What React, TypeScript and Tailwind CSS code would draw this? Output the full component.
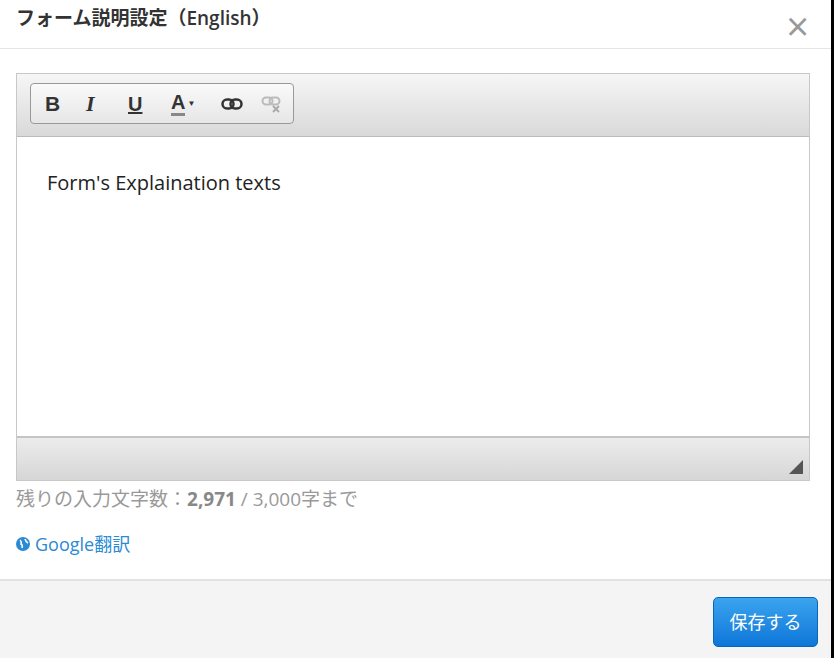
import React from "react";

export default function App() {
  const f = { fontFamily: '"Open Sans", "Noto Sans CJK JP", sans-serif' };
  return (
    <div className="w-[834px] h-[658px] flex bg-black" style={f}>
      <div className="w-[831px] h-[658px] flex flex-col bg-white">
        <div className="h-[49px] border-b border-[#e5e5e5] flex justify-between items-start px-4">
          <div className="text-[19px] text-[#333] mt-[4px] font-semibold">フォーム説明設定（English）</div>
          <div className="text-[40px] leading-none text-[#999] mt-[6px] mr-[6px]">×</div>
        </div>
        <div className="flex-1 px-4 pt-6">
          <div className="w-[794px] h-[408px] border border-[#c8c8c8] flex flex-col">
            <div className="h-[63px] bg-gradient-to-b from-[#f6f6f6] to-[#d9d9d9] border-b border-[#bbb] flex items-start pt-[9px] pl-[13px]">
              <div className="h-[41px] w-[264px] rounded-[4px] border border-[#999] bg-gradient-to-b from-[#fafafa] to-[#e6e6e6] flex items-center pl-[14px] text-[#333]" style={{ fontFamily: '"Liberation Sans", sans-serif' }}>
                <span className="font-bold text-[21px] w-[41px]">B</span>
                <span className="italic font-bold text-[22px] w-[42px]" style={{ fontFamily: '"Liberation Serif", serif' }}>I</span>
                <span className="underline font-bold text-[20px] w-[43px]">U</span>
                <span className="flex items-center w-[50px]">
                  <span className="font-bold text-[20px] border-b-[3px] border-[#888] leading-[21px]">A</span>
                  <span className="text-[8px] ml-[2px]">▼</span>
                </span>
                <svg width="22" height="14" viewBox="0 0 22 14" className="mr-[18px]">
                  <rect x="1.5" y="2.5" width="11" height="9" rx="4.5" fill="none" stroke="#333" strokeWidth="2.5" />
                  <rect x="9.5" y="2.5" width="11" height="9" rx="4.5" fill="none" stroke="#333" strokeWidth="2.5" />
                </svg>
                <svg width="22" height="18" viewBox="0 0 22 18">
                  <rect x="1.5" y="2.5" width="10" height="7" rx="3.5" fill="none" stroke="#bbb" strokeWidth="2" />
                  <rect x="8.5" y="2.5" width="10" height="7" rx="3.5" fill="none" stroke="#bbb" strokeWidth="2" />
                  <path d="M12 11 L18 17 M18 11 L12 17" stroke="#aaa" strokeWidth="2" />
                </svg>
              </div>
            </div>
            <div className="flex-1 bg-white px-[30px] pt-[31px] text-[20px] text-[#222]">Form's Explaination texts</div>
            <div className="h-[44px] border-t-2 border-[#c4c4c4] bg-gradient-to-b from-[#ececec] to-[#d6d6d6] flex items-end justify-end p-[6px]">
              <svg width="14" height="14" viewBox="0 0 14 14"><path d="M14 0 L14 14 L0 14 Z" fill="#555" /></svg>
            </div>
          </div>
          <div className="mt-[4px] text-[19px] text-[#999]">残りの入力文字数：<b className="text-[#888]">2,971</b> / 3,000字まで</div>
          <div className="mt-[17px] text-[18px] text-[#2a8ad4] flex items-center gap-[5px]">
            <svg width="14" height="14" viewBox="0 0 14 14"><circle cx="7" cy="7" r="7" fill="#2a8ad4" /><path d="M4 3 Q6 5 5 7 Q7 8 6 11 M9 2 Q10 5 12 6" stroke="#fff" strokeWidth="1.6" fill="none" /></svg>
            Google翻訳
          </div>
        </div>
        <div className="h-[79px] bg-[#f4f4f4] border-t-2 border-[#e2e2e2] flex items-start justify-end pr-[13px] pt-[16px]">
          <button className="w-[105px] h-[50px] rounded-[5px] bg-gradient-to-b from-[#3aa4ee] to-[#0c76d8] border border-[#0a66bb] text-white text-[18px]">保存する</button>
        </div>
      </div>
    </div>
  );
}
